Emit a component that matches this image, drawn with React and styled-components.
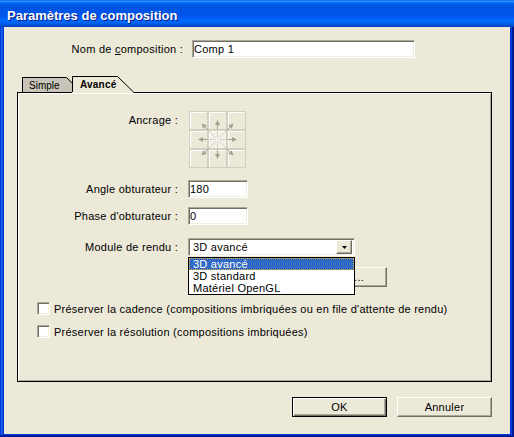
import React from "react";
import styled, { createGlobalStyle, css } from "styled-components";

const GlobalStyle = createGlobalStyle`
  html, body {
    margin: 0;
    padding: 0;
    background: #ece9d8;
  }
  body {
    font-family: "Liberation Sans", Arial, sans-serif;
    font-size: 11px;
    color: #000;
  }
`;

const sunken = css`
  box-sizing: border-box;
  border: 1px solid;
  border-color: #aca899 #ffffff #ffffff #aca899;
  box-shadow: inset 1px 1px #716f64, inset -1px -1px #f1efe2;
  background: #fff;
`;

const raised = css`
  box-sizing: border-box;
  border: 1px solid;
  border-color: #ffffff #716f64 #716f64 #ffffff;
  box-shadow: inset -1px -1px #aca899;
  background: #ece9d8;
`;

const Window = styled.div`
  width: 514px;
  height: 437px;
  display: flex;
  flex-direction: column;
  background: #0831d9;
  box-shadow: inset -1px -1px #00138c, inset 1px 1px #0831d9,
    inset -2px -2px #001ea0, inset 2px 2px #166aee, inset -3px -3px #003bda,
    inset 3px 3px #0855dd;
  overflow: hidden;
`;

const TitleBar = styled.div`
  height: 27px;
  box-sizing: border-box;
  padding: 8px 0 0 7px;
  background: linear-gradient(
    to bottom,
    #0058ee 0%,
    #3593ff 4%,
    #288eff 6%,
    #127dff 8%,
    #036ffc 10%,
    #0262ee 14%,
    #0057e5 20%,
    #0054e3 24%,
    #0055eb 56%,
    #005bf5 66%,
    #026afe 76%,
    #0062ef 86%,
    #0052d6 92%,
    #0046c0 100%
  );
  color: #fff;
  font: bold 13px/15px "Liberation Sans", Arial, sans-serif;
  text-shadow: 1px 1px #0a1883;
`;

const Frame = styled.div`
  flex: 1;
  display: flex;
  padding: 0 4px 3px;
`;

const Body = styled.div`
  flex: 1;
  display: flex;
  flex-direction: column;
  background: #ece9d8;
  padding: 13px 18px 17px 13px;
  letter-spacing: 0.25px;
`;

const NameRow = styled.div`
  display: grid;
  grid-template-columns: 166px 223px;
  column-gap: 9px;
  align-items: center;
`;

const Label = styled.div`
  text-align: right;
  white-space: nowrap;
  padding-top: ${(p) => p.$top || 0}px;
`;

const TextField = styled.input`
  ${sunken};
  width: ${(p) => p.$w}px;
  height: 18px;
  margin: 0;
  padding: 0 0 0 1px;
  font: inherit;
  letter-spacing: inherit;
  color: #000;
  outline: none;
`;

const TabStrip = styled.div`
  display: flex;
  align-items: flex-end;
  height: 16px;
  margin-top: 18px;
  padding-left: 5px;
  position: relative;
  z-index: 1;
`;

const Tab = styled.div`
  position: relative;
  width: ${(p) => p.$w}px;
  height: ${(p) => p.$h}px;
  margin-left: ${(p) => p.$shift || 0}px;
  margin-bottom: ${(p) => (p.$active ? -1 : 0)}px;
  z-index: ${(p) => (p.$active ? 2 : 1)};
  box-sizing: border-box;
  padding: 3px 0 0 ${(p) => p.$pad}px;
  font-size: 10px;
  line-height: 12px;
  font-weight: ${(p) => (p.$active ? "bold" : "normal")};
  letter-spacing: ${(p) => (p.$active ? "0.2px" : "0")};
`;

const TabSvg = styled.svg`
  position: absolute;
  left: 0;
  top: 0;
`;

const TabText = styled.span`
  position: relative;
`;

const Panel = styled.div`
  height: 290px;
  box-sizing: border-box;
  border: 1px solid #000;
  box-shadow: inset 1px 1px #ffffff, inset -1px -1px #aca899;
  padding-top: 18px;
  display: flex;
  flex-direction: column;
`;

const FieldRow = styled.div`
  display: grid;
  grid-template-columns: 160px auto;
  column-gap: 10px;
  align-items: ${(p) => (p.$top ? "start" : "center")};
  justify-content: start;
  margin-top: ${(p) => p.$mt || 0}px;
`;

const AnchorBox = styled.div`
  margin-left: 1px;
  height: 57px;
`;

const SelectWrap = styled.div`
  position: relative;
  width: 167px;
`;

const SelectField = styled.div`
  ${sunken};
  height: 18px;
  display: flex;
  align-items: center;
  padding: 2px 2px 2px 4px;
`;

const SelectValue = styled.span`
  flex: 1;
  white-space: nowrap;
`;

const DropButton = styled.div`
  ${raised};
  width: 16px;
  height: 14px;
  display: flex;
  align-items: center;
  justify-content: center;
`;

const DropList = styled.ul`
  position: absolute;
  left: 0;
  top: 19px;
  width: 167px;
  box-sizing: border-box;
  margin: 0;
  padding: 0;
  list-style: none;
  background: #fff;
  border: 1px solid #000;
  z-index: 3;
`;

const DropItem = styled.li`
  height: 12px;
  line-height: 12px;
  padding-left: 4px;
  box-sizing: border-box;
  white-space: nowrap;
  ${(p) =>
    p.$selected &&
    css`
      background: #316ac5;
      color: #fff;
      outline: 1px dotted #f0b040;
      outline-offset: -1px;
    `}
`;

const PushButton = styled.div`
  ${raised};
  width: ${(p) => p.$w}px;
  height: 20px;
  display: flex;
  align-items: center;
  justify-content: ${(p) => (p.$alignEnd ? "flex-end" : "center")};
  padding-right: ${(p) => p.$pr || 0}px;
  white-space: nowrap;
  ${(p) =>
    p.$default &&
    css`
      border: 1px solid #000;
      box-shadow: inset 1px 1px #ffffff, inset -1px -1px #716f64,
        inset -2px -2px #aca899;
    `}
`;

const CheckRow = styled.label`
  display: flex;
  align-items: center;
  gap: 4px;
  margin-left: 19px;
  margin-top: ${(p) => p.$mt}px;
  white-space: nowrap;
`;

const CheckBox = styled.span`
  ${sunken};
  width: 13px;
  height: 13px;
  flex: none;
`;

const ButtonRow = styled.div`
  display: flex;
  justify-content: flex-end;
  gap: 10px;
  margin-top: 15px;
`;

const TabShape = ({ w, h, active }) => {
  const s = active ? 16 : 15;
  const fill = `M0 ${h} V0 H${w - s} L${w} ${h} Z`;
  const line = `M0.5 ${active ? h - 1 : h} V0.5 H${w - s - 0.5} L${w - 0.5} ${
    active ? h - 1 : h
  }`;
  return (
    <TabSvg width={w} height={h}>
      <path d={fill} fill={active ? "#ece9d8" : "#c8c5b8"} />
      <path d={line} fill="none" stroke="#000" />
    </TabSvg>
  );
};

const AnchorIcon = () => {
  const cells = [];
  for (let r = 0; r < 3; r++) {
    for (let c = 0; c < 3; c++) {
      const x = c * 19;
      const y = r * 19;
      const mid = r === 1 && c === 1;
      cells.push(
        <g key={`${r}-${c}`}>
          <rect
            x={x + 0.5}
            y={y + 0.5}
            width="18"
            height="18"
            fill={mid ? "#f3f1e8" : "#ece9d8"}
            stroke="#d4d0c1"
          />
          <path
            d={`M${x + 1.5} ${y + 17} V${y + 1.5} H${x + 17}`}
            fill="none"
            stroke="#ffffff"
          />
        </g>
      );
    }
  }

  const dirs = [
    [0, -1],
    [1, -1],
    [1, 0],
    [1, 1],
    [0, 1],
    [-1, 1],
    [-1, 0],
    [-1, -1],
  ];
  const c0 = 28.5;
  const arrows = dirs.map(([dx, dy], i) => {
    const diag = dx !== 0 && dy !== 0;
    const reach = diag ? 16 : 19.5;
    const start = diag ? 9 : 10;
    const len = Math.hypot(dx, dy);
    const ux = dx / len;
    const uy = dy / len;
    const tx = c0 + dx * reach;
    const ty = c0 + dy * reach;
    const bx = tx - ux * 5;
    const by = ty - uy * 5;
    const px = -uy * 2.5;
    const py = ux * 2.5;
    return (
      <g key={i}>
        <line
          x1={c0 + ux * 2}
          y1={c0 + uy * 2}
          x2={c0 + dx * start}
          y2={c0 + dy * start}
          stroke="#d6d3c6"
        />
        <line
          x1={c0 + dx * start}
          y1={c0 + dy * start}
          x2={bx}
          y2={by}
          stroke="#a4a294"
        />
        <polygon
          points={`${tx},${ty} ${bx + px},${by + py} ${bx - px},${by - py}`}
          fill="#a4a294"
        />
      </g>
    );
  });

  return (
    <svg width="57" height="57" viewBox="0 0 57 57">
      {cells}
      {arrows}
    </svg>
  );
};

export default function App() {
  return (
    <>
      <GlobalStyle />
      <Window>
        <TitleBar>Paramètres de composition</TitleBar>
        <Frame>
          <Body>
            <NameRow>
              <Label>
                Nom de <u>c</u>omposition :
              </Label>
              <TextField $w={223} readOnly defaultValue="Comp 1" />
            </NameRow>

            <TabStrip>
              <Tab $w={60} $h={15} $pad={7}>
                <TabShape w={60} h={15} />
                <TabText>Simple</TabText>
              </Tab>
              <Tab $w={62} $h={17} $pad={8} $shift={-10} $active>
                <TabShape w={62} h={17} active />
                <TabText>Avancé</TabText>
              </Tab>
            </TabStrip>

            <Panel>
              <FieldRow $top>
                <Label $top={3}>Ancrage :</Label>
                <AnchorBox>
                  <AnchorIcon />
                </AnchorBox>
              </FieldRow>

              <FieldRow $mt={12}>
                <Label>Angle obturateur :</Label>
                <TextField $w={60} readOnly defaultValue="180" />
              </FieldRow>

              <FieldRow $mt={9}>
                <Label>Phase d'obturateur :</Label>
                <TextField $w={60} readOnly defaultValue="0" />
              </FieldRow>

              <FieldRow $mt={13}>
                <Label>Module de rendu :</Label>
                <SelectWrap>
                  <SelectField>
                    <SelectValue>3D avancé</SelectValue>
                    <DropButton>
                      <svg width="5" height="3" viewBox="0 0 5 3">
                        <polygon points="0,0 5,0 2.5,3" fill="#000" />
                      </svg>
                    </DropButton>
                  </SelectField>
                  <DropList>
                    <DropItem $selected>3D avancé</DropItem>
                    <DropItem>3D standard</DropItem>
                    <DropItem>Matériel OpenGL</DropItem>
                  </DropList>
                </SelectWrap>
              </FieldRow>

              <FieldRow $mt={11}>
                <span />
                <PushButton $w={199} $alignEnd $pr={22}>
                  Options...
                </PushButton>
              </FieldRow>

              <CheckRow $mt={15}>
                <CheckBox />
                Préserver la cadence (compositions imbriquées ou en file
                d'attente de rendu)
              </CheckRow>
              <CheckRow $mt={10}>
                <CheckBox />
                Préserver la résolution (compositions imbriquées)
              </CheckRow>
            </Panel>

            <ButtonRow>
              <PushButton $w={95} $default>
                OK
              </PushButton>
              <PushButton $w={95}>Annuler</PushButton>
            </ButtonRow>
          </Body>
        </Frame>
      </Window>
    </>
  );
}
